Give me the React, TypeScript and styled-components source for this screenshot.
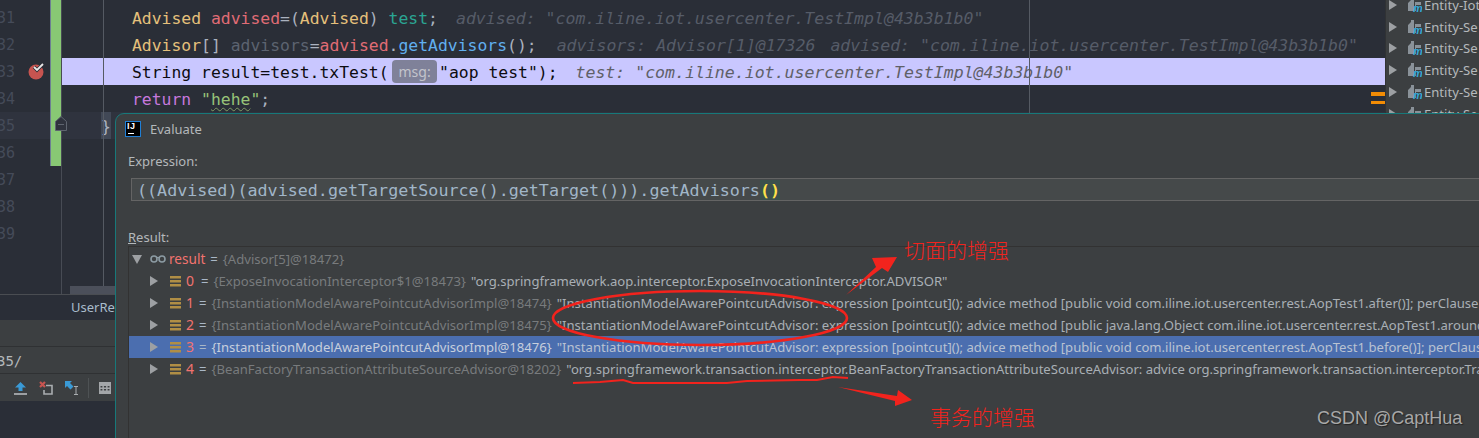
import styled, { createGlobalStyle, css } from "styled-components";

const GlobalStyle = createGlobalStyle`
  html, body {
    margin: 0;
    padding: 0;
    background: #2a2e37;
  }
`;

const MONO = `"DejaVu Sans Mono", "Liberation Mono", monospace`;
const UI = `"Noto Sans", "Open Sans", sans-serif`;
const CJK = `"Noto Sans CJK SC", sans-serif`;

const TOKEN_COLORS = {
  type: "#e5c07b",
  local: "#e06c75",
  field: "#2aa593",
  method: "#61afef",
  punct: "#abb2bf",
  unused: "#5c6370",
  keyword: "#c678dd",
  string: "#98c379",
  plain: "#0c0c10",
};

type TokenKind = keyof typeof TOKEN_COLORS;

const Page = styled.div`
  position: relative;
  width: 1479px;
  height: 438px;
  overflow: hidden;
  display: flex;
  flex-direction: column;
  background: #2a2e37;
`;

// Editor

const EditorArea = styled.div`
  position: relative;
  display: flex;
  height: 294px;
  flex: none;
  overflow: hidden;
  border-bottom: 1px solid #4a4d52;
`;

const Gutter = styled.div`
  width: 61px;
  flex: none;
  margin-top: -23px;
  border-right: 1px solid #474b54;
`;

const GutterRow = styled.div<{ $active?: boolean; $changed?: boolean }>`
  position: relative;
  height: 27px;
  display: flex;
  background: ${({ $active }) => ($active ? "#2f333e" : "transparent")};
  ${({ $changed }) =>
    $changed &&
    css`
      &::after {
        content: "";
        position: absolute;
        left: 51px;
        top: 0;
        bottom: 0;
        width: 10px;
        background: #88c874;
        box-shadow: -1px 0 0 #6d7f93;
      }
    `}
`;

const LineNumber = styled.span`
  width: 15px;
  overflow: hidden;
  display: flex;
  justify-content: flex-end;
  font: 15px/29px ${MONO};
  color: #454b59;
`;

const BreakpointIcon = styled.svg`
  position: absolute;
  left: 28px;
  top: 4px;
`;

const FoldIcon = styled.svg`
  position: absolute;
  left: 55px;
  top: 4px;
  z-index: 1;
`;

const CodePane = styled.div`
  position: relative;
  flex: 1;
  min-width: 0;
  margin-top: -23px;
`;

const CodeRow = styled.div<{ $current?: boolean; $active?: boolean }>`
  height: 27px;
  padding-left: 70px;
  display: flex;
  white-space: pre;
  font: 16.4px/29px ${MONO};
  background: ${({ $current, $active }) =>
    $current ? "#c9c7ff" : $active ? "#2f333e" : "transparent"};
`;

const Tok = styled.span<{ $kind: TokenKind }>`
  color: ${({ $kind }) => TOKEN_COLORS[$kind]};
`;

const Wavy = styled(Tok)`
  text-decoration: underline wavy #7f9a63 1px;
  text-underline-offset: 2px;
`;

const Hint = styled.span<{ $gap: number }>`
  margin-left: ${({ $gap }) => $gap}px;
  font-size: 16.55px;
  font-style: italic;
  color: #565c68;
`;

const CurrentHint = styled(Hint)`
  color: #5f6068;
`;

const ParamBadge = styled.span`
  align-self: center;
  height: 23px;
  width: 45px;
  margin: 0 2px 0 3.5px;
  border-radius: 4px;
  background: #7f8199;
  color: #c3c4cc;
  font: 14px/23px ${UI};
  text-align: center;
`;

const MatchedBrace = styled.span`
  margin-left: -31px;
  width: 10px;
  height: 27px;
  color: #abb2bf;
  background: #414856;
`;

const ClosingBrace = styled(Tok)`
  margin-left: -3px;
`;

const Guide = styled.div<{ $left: number }>`
  position: absolute;
  left: ${({ $left }) => $left}px;
  top: 0;
  bottom: 0;
  width: 1px;
  background: #555a63;
`;

const ScrollThumb = styled.div`
  position: absolute;
  left: 8px;
  bottom: 0;
  width: 60px;
  height: 8px;
  background: #4b4f5a;
`;

const ErrorStripe = styled.div<{ $top: number; $height: number }>`
  position: absolute;
  right: 0;
  top: ${({ $top }) => $top + 23}px;
  width: 14px;
  height: ${({ $height }) => $height}px;
  background: #f28c05;
`;

// Project tree on the right

const ProjectPanel = styled.div`
  width: 93px;
  flex: none;
  margin-top: -6px;
  background: #3c3f41;
  border-left: 1px solid #303234;
`;

const ProjectRow = styled.div`
  height: 21.8px;
  display: flex;
  align-items: center;
  padding-left: 3px;
  font: 13.1px ${UI};
  color: #b4b8bb;
  white-space: nowrap;
  overflow: hidden;
`;

const ProjectName = styled.span`
  margin-left: 2px;
`;

const Arrow = styled.svg`
  flex: none;
`;

// Bottom tool window

const TabStrip = styled.div`
  height: 25px;
  flex: none;
  padding-left: 71px;
  background: #2a2e37;
  color: #a9bccb;
  font: 13px/25px ${UI};
`;

const ToolHeader = styled.div`
  height: 26px;
  flex: none;
  background: #3c3f41;
  border-bottom: 1px solid #2f3133;
`;

const PathBar = styled.div`
  height: 26px;
  flex: none;
  background: #3c3f41;
  border-bottom: 1px solid #2f3133;
  color: #b4b8bb;
  font: 14px/28px ${MONO};
  text-indent: -3px;
`;

const ToolBar = styled.div`
  height: 27px;
  flex: none;
  display: flex;
  align-items: center;
  gap: 12px;
  padding-left: 14px;
  background: #3c3f41;
`;

const ToolSeparator = styled.div`
  width: 1px;
  height: 20px;
  margin: 0 -2px 0 -4px;
  background: #4e5254;
`;

// Evaluate dialog

const Dialog = styled.div`
  position: absolute;
  left: 115px;
  top: 113px;
  right: -12px;
  bottom: -12px;
  padding-left: 12px;
  background: #3c3f41;
  border: 1px solid #17797a;
  border-top-left-radius: 9px;
`;

const DialogTitle = styled.div`
  height: 30px;
  margin-left: -3px;
  display: flex;
  align-items: center;
  gap: 9px;
  color: #b4b8bb;
  font: 13px ${UI};
`;

const LogoBox = styled.div`
  position: relative;
  width: 13px;
  height: 14px;
  padding-left: 1px;
  border: 1px solid #1f7fd6;
  background: #000;
  color: #fff;
  font: bold 9px/9px "Liberation Sans", sans-serif;
  letter-spacing: 0.5px;

  &::after {
    content: "";
    position: absolute;
    left: 2px;
    bottom: 2px;
    width: 6px;
    height: 1px;
    background: #fff;
  }
`;

const FieldLabel = styled.div<{ $top: number }>`
  margin-top: ${({ $top }) => $top}px;
  height: 18px;
  color: #b4b8bb;
  font: 13px/18px ${UI};
`;

const Mnemonic = styled.span`
  text-decoration: underline;
`;

const ExpressionInput = styled.div`
  height: 21px;
  margin: 8px 0 0 3px;
  padding-left: 5px;
  background: #45494a;
  border: 1px solid #646464;
  font: 16.7px/22px ${MONO};
  color: #a1b6c8;
  white-space: pre;
`;

const MatchedParens = styled.span`
  color: #ffe24a;
  font-weight: bold;
  background: #3b514d;
`;

const ResultTree = styled.div`
  padding-top: 1px;
  height: 200px;
  border-top: 1px solid #323232;
  border-left: 1px solid #323232;
`;

const ResultRow = styled.div<{ $selected?: boolean }>`
  height: 22px;
  display: flex;
  align-items: center;
  white-space: pre;
  font: 13.1px/22px ${UI};
  color: #a5abb1;
  background: ${({ $selected }) => ($selected ? "#4b6eaf" : "transparent")};
`;

const Indent = styled.span<{ $width: number }>`
  flex: none;
  width: ${({ $width }) => $width}px;
`;

const KeyName = styled.span`
  color: #f2736f;
`;

const RootKey = styled(KeyName)`
  margin-left: 3px;
  font-size: 13.6px;
`;

const ChildKey = styled(KeyName)`
  margin-left: 5px;
  width: 10px;
  font-size: 14px;
`;

const Equals = styled.span`
  color: #a9b7c6;
  margin: 0 5px;
`;

const TypeName = styled.span<{ $selected?: boolean }>`
  color: ${({ $selected }) => ($selected ? "#c7cfdd" : "#787b7d")};
  margin-right: 5px;
`;

const ValueText = styled.span<{ $selected?: boolean }>`
  color: ${({ $selected }) => ($selected ? "#b9c2d2" : "#a9afb5")};
`;

const Annotation = styled.div<{ $left: number; $top: number }>`
  position: absolute;
  left: ${({ $left }) => $left}px;
  top: ${({ $top }) => $top}px;
  font: 300 21px/28px ${CJK};
  color: #f2231d;
`;

const AnnotationLayer = styled.svg`
  position: absolute;
  left: 0;
  top: 0;
  pointer-events: none;
`;

const Watermark = styled.div`
  position: absolute;
  left: 1317px;
  top: 407px;
  font: 18px/22px "Liberation Sans", sans-serif;
  color: #a8a8a8;
  text-shadow: 1px 1px 1px #222;
`;

// Icons

function RightArrow() {
  return (
    <Arrow width="8" height="10" viewBox="0 0 8 10">
      <polygon points="0,0 8,5 0,10" fill="#9da0a3" />
    </Arrow>
  );
}

function DownArrow() {
  return (
    <Arrow width="10" height="9" viewBox="0 0 10 9">
      <polygon points="0,0 10,0 5,9" fill="#9da0a3" />
    </Arrow>
  );
}

function ModuleIcon() {
  return (
    <svg width="14" height="14" viewBox="0 0 14 14" style={{ flex: "none" }}>
      <path d="M0 13V5l3-3V0h3v13z M7 4h6v3H8v6H7z" fill="#8a9299" />
      <text x="5" y="14" fontSize="11" fontStyle="italic" fontWeight="700" fill="#35a7d6" fontFamily="Liberation Sans">
        m
      </text>
    </svg>
  );
}

function GlassesIcon() {
  return (
    <svg width="16" height="8" viewBox="0 0 16 8" style={{ flex: "none" }}>
      <circle cx="4" cy="4" r="3" fill="none" stroke="#8c9ba3" strokeWidth="1.6" />
      <circle cx="12" cy="4" r="3" fill="none" stroke="#8c9ba3" strokeWidth="1.6" />
      <path d="M6 2.5h4" stroke="#8c9ba3" strokeWidth="1.2" />
    </svg>
  );
}

function ArrayIcon() {
  return (
    <svg width="11" height="11" viewBox="0 0 11 11" style={{ flex: "none" }}>
      <path d="M0 0h11v2.5H0z M0 4h11v2.5H0z M0 8h11v2.5H0z" fill="#b08e45" />
    </svg>
  );
}

function UploadIcon() {
  return (
    <svg width="13" height="14" viewBox="0 0 13 14">
      <path d="M6.5 1 12 6.5H8.5V10h-4V6.5H1z" fill="#3a9ad6" />
      <path d="M0 12h13v2H0z" fill="#9da0a3" />
    </svg>
  );
}

function RemoveFrameIcon() {
  return (
    <svg width="14" height="14" viewBox="0 0 14 14">
      <path d="M1 1l5 5M6 1 1 6" stroke="#c75450" strokeWidth="2.2" />
      <path d="M7 4.5h6v8.5H5V9" fill="none" stroke="#a9adb0" strokeWidth="1.6" />
    </svg>
  );
}

function StepCursorIcon() {
  return (
    <svg width="15" height="14" viewBox="0 0 15 14">
      <path d="M0 0h7L5 2l3.5 3.5-3 3L2 5 0 7z" fill="#3a9ad6" />
      <path d="M9 5.5h4M9 13.5h4M11 5.5v8" stroke="#a9adb0" strokeWidth="1" fill="none" />
    </svg>
  );
}

function CalculatorIcon() {
  return (
    <svg width="12" height="12" viewBox="0 0 12 12">
      <path
        d="M0 0h12v12H0z M1.5 4v1.5H3.4V4z M4.9 4v1.5h2.2V4z M8.6 4v1.5h1.9V4z M1.5 7v1.5H3.4V7z M4.9 7v1.5h2.2V7z M8.6 7v1.5h1.9V7z"
        fillRule="evenodd"
        fill="#a3a6a9"
      />
    </svg>
  );
}

const PROJECT_ROWS = ["Entity-Iot", "Entity-Se", "Entity-Se", "Entity-Se", "Entity-Se", "Entity-Se"];
const LINE_NUMBERS = [30, 31, 32, 33, 34, 35, 36, 37, 38, 39];

const POINTCUT = "InstantiationModelAwarePointcutAdvisor: expression [pointcut](); advice method ";
const RESULT_ROWS = [
  {
    key: "0",
    type: "{ExposeInvocationInterceptor$1@18473}",
    value: '"org.springframework.aop.interceptor.ExposeInvocationInterceptor.ADVISOR"',
  },
  {
    key: "1",
    type: "{InstantiationModelAwarePointcutAdvisorImpl@18474}",
    value: `"${POINTCUT}[public void com.iline.iot.usercenter.rest.AopTest1.after()]; perClauseKind=SINGLETON"`,
  },
  {
    key: "2",
    type: "{InstantiationModelAwarePointcutAdvisorImpl@18475}",
    value: `"${POINTCUT}[public java.lang.Object com.iline.iot.usercenter.rest.AopTest1.around()]; perClauseKind=SINGLETON"`,
  },
  {
    key: "3",
    type: "{InstantiationModelAwarePointcutAdvisorImpl@18476}",
    value: `"${POINTCUT}[public void com.iline.iot.usercenter.rest.AopTest1.before()]; perClauseKind=SINGLETON"`,
    selected: true,
  },
  {
    key: "4",
    type: "{BeanFactoryTransactionAttributeSourceAdvisor@18202}",
    value:
      '"org.springframework.transaction.interceptor.BeanFactoryTransactionAttributeSourceAdvisor: advice org.springframework.transaction.interceptor.TransactionInterceptor"',
  },
];

export default function App() {
  return (
    <Page>
      <GlobalStyle />

      <EditorArea>
        <Gutter>
          {LINE_NUMBERS.map((n) => (
            <GutterRow key={n} $active={n === 35} $changed={n <= 36}>
              <LineNumber>{n}</LineNumber>
              {n === 33 && (
                <BreakpointIcon width="17" height="18" viewBox="0 0 17 18">
                  <circle cx="8" cy="10" r="7.5" fill="#c75450" />
                  <path d="M6 5l3 3 6-6" fill="none" stroke="#2a2e37" strokeWidth="3.4" />
                  <path d="M6 5l3 3 6-6" fill="none" stroke="#e8e8e8" strokeWidth="1.8" />
                </BreakpointIcon>
              )}
              {n === 35 && (
                <FoldIcon width="12" height="15" viewBox="0 0 12 15">
                  <path d="M.5 14.5V5.5L6 .5l5.5 5v9z" fill="#2f333e" stroke="#5f6570" />
                  <path d="M3 8.5h6" stroke="#5f6570" />
                </FoldIcon>
              )}
            </GutterRow>
          ))}
        </Gutter>

        <CodePane>
          <Guide $left={41} />
          <Guide $left={967} />
          <CodeRow />
          <CodeRow>
            <Tok $kind="type">Advised </Tok>
            <Tok $kind="local">advised</Tok>
            <Tok $kind="punct">=(</Tok>
            <Tok $kind="type">Advised</Tok>
            <Tok $kind="punct">) </Tok>
            <Tok $kind="field">test</Tok>
            <Tok $kind="punct">;</Tok>
            <Hint $gap={18}>advised: "com.iline.iot.usercenter.TestImpl@43b3b1b0"</Hint>
          </CodeRow>
          <CodeRow>
            <Tok $kind="type">Advisor</Tok>
            <Tok $kind="punct">[] </Tok>
            <Tok $kind="unused">advisors</Tok>
            <Tok $kind="punct">=</Tok>
            <Tok $kind="local">advised</Tok>
            <Tok $kind="punct">.</Tok>
            <Tok $kind="method">getAdvisors</Tok>
            <Tok $kind="punct">();</Tok>
            <Hint $gap={20}>advisors: Advisor[1]@17326</Hint>
            <Hint $gap={15}>advised: "com.iline.iot.usercenter.TestImpl@43b3b1b0"</Hint>
          </CodeRow>
          <CodeRow $current>
            <Tok $kind="plain">String result=test.txTest(</Tok>
            <ParamBadge>msg:</ParamBadge>
            <Tok $kind="plain">"aop test");</Tok>
            <CurrentHint $gap={18}>test: "com.iline.iot.usercenter.TestImpl@43b3b1b0"</CurrentHint>
          </CodeRow>
          <CodeRow>
            <Tok $kind="keyword">return </Tok>
            <Tok $kind="string">"</Tok>
            <Wavy $kind="string">hehe</Wavy>
            <Tok $kind="string">"</Tok>
            <Tok $kind="punct">;</Tok>
          </CodeRow>
          <CodeRow $active>
            <MatchedBrace>{"}"}</MatchedBrace>
          </CodeRow>
          <CodeRow />
          <CodeRow />
          <CodeRow>
            <ClosingBrace $kind="punct">{"}"}</ClosingBrace>
          </CodeRow>
          <ScrollThumb />
          <ErrorStripe $top={92} $height={4} />
          <ErrorStripe $top={101} $height={3} />
        </CodePane>

        <ProjectPanel>
          {PROJECT_ROWS.map((name, i) => (
            <ProjectRow key={i}>
              <RightArrow />
              <Indent $width={11} />
              <ModuleIcon />
              <ProjectName>{name}</ProjectName>
            </ProjectRow>
          ))}
        </ProjectPanel>
      </EditorArea>

      <TabStrip>UserRe</TabStrip>
      <ToolHeader />
      <PathBar>35/</PathBar>
      <ToolBar>
        <UploadIcon />
        <RemoveFrameIcon />
        <StepCursorIcon />
        <ToolSeparator />
        <CalculatorIcon />
      </ToolBar>

      <Dialog>
        <DialogTitle>
          <LogoBox>IJ</LogoBox>
          Evaluate
        </DialogTitle>
        <FieldLabel $top={8}>Expression:</FieldLabel>
        <ExpressionInput>
          ((Advised)(advised.getTargetSource().getTarget())).getAdvisors
          <MatchedParens>()</MatchedParens>
        </ExpressionInput>
        <FieldLabel $top={27}>
          <Mnemonic>R</Mnemonic>esult:
        </FieldLabel>
        <ResultTree>
          <ResultRow>
            <Indent $width={3} />
            <DownArrow />
            <Indent $width={8} />
            <GlassesIcon />
            <RootKey>result</RootKey>
            <Equals>=</Equals>
            <TypeName>{"{Advisor[5]@18472}"}</TypeName>
          </ResultRow>
          {RESULT_ROWS.map((row) => (
            <ResultRow key={row.key} $selected={row.selected}>
              <Indent $width={21} />
              <RightArrow />
              <Indent $width={12} />
              <ArrayIcon />
              <ChildKey>{row.key}</ChildKey>
              <Equals>=</Equals>
              <TypeName $selected={row.selected}>{row.type}</TypeName>
              <ValueText $selected={row.selected}>{row.value}</ValueText>
            </ResultRow>
          ))}
        </ResultTree>
      </Dialog>

      <AnnotationLayer width="1479" height="438" viewBox="0 0 1479 438">
        <ellipse cx="700" cy="318" rx="147" ry="27" fill="none" stroke="#f2231d" strokeWidth="2.6" />
        <polygon points="846,295 876,267 872,258 897,257 888,272 882,268" fill="#f2231d" />
        <path
          d="M573 383 L600 382 L623 380 L633 383 L727 383 L747 381 L800 380 L817 380 L833 377 L848 378"
          fill="none"
          stroke="#f2231d"
          strokeWidth="2"
        />
        <polygon points="838,387 897,396 898,390 912,400 895,406 895,401" fill="#f2231d" />
      </AnnotationLayer>

      <Annotation $left={904} $top={235}>切面的增强</Annotation>
      <Annotation $left={930} $top={402}>事务的增强</Annotation>
      <Watermark>CSDN @CaptHua</Watermark>
    </Page>
  );
}
